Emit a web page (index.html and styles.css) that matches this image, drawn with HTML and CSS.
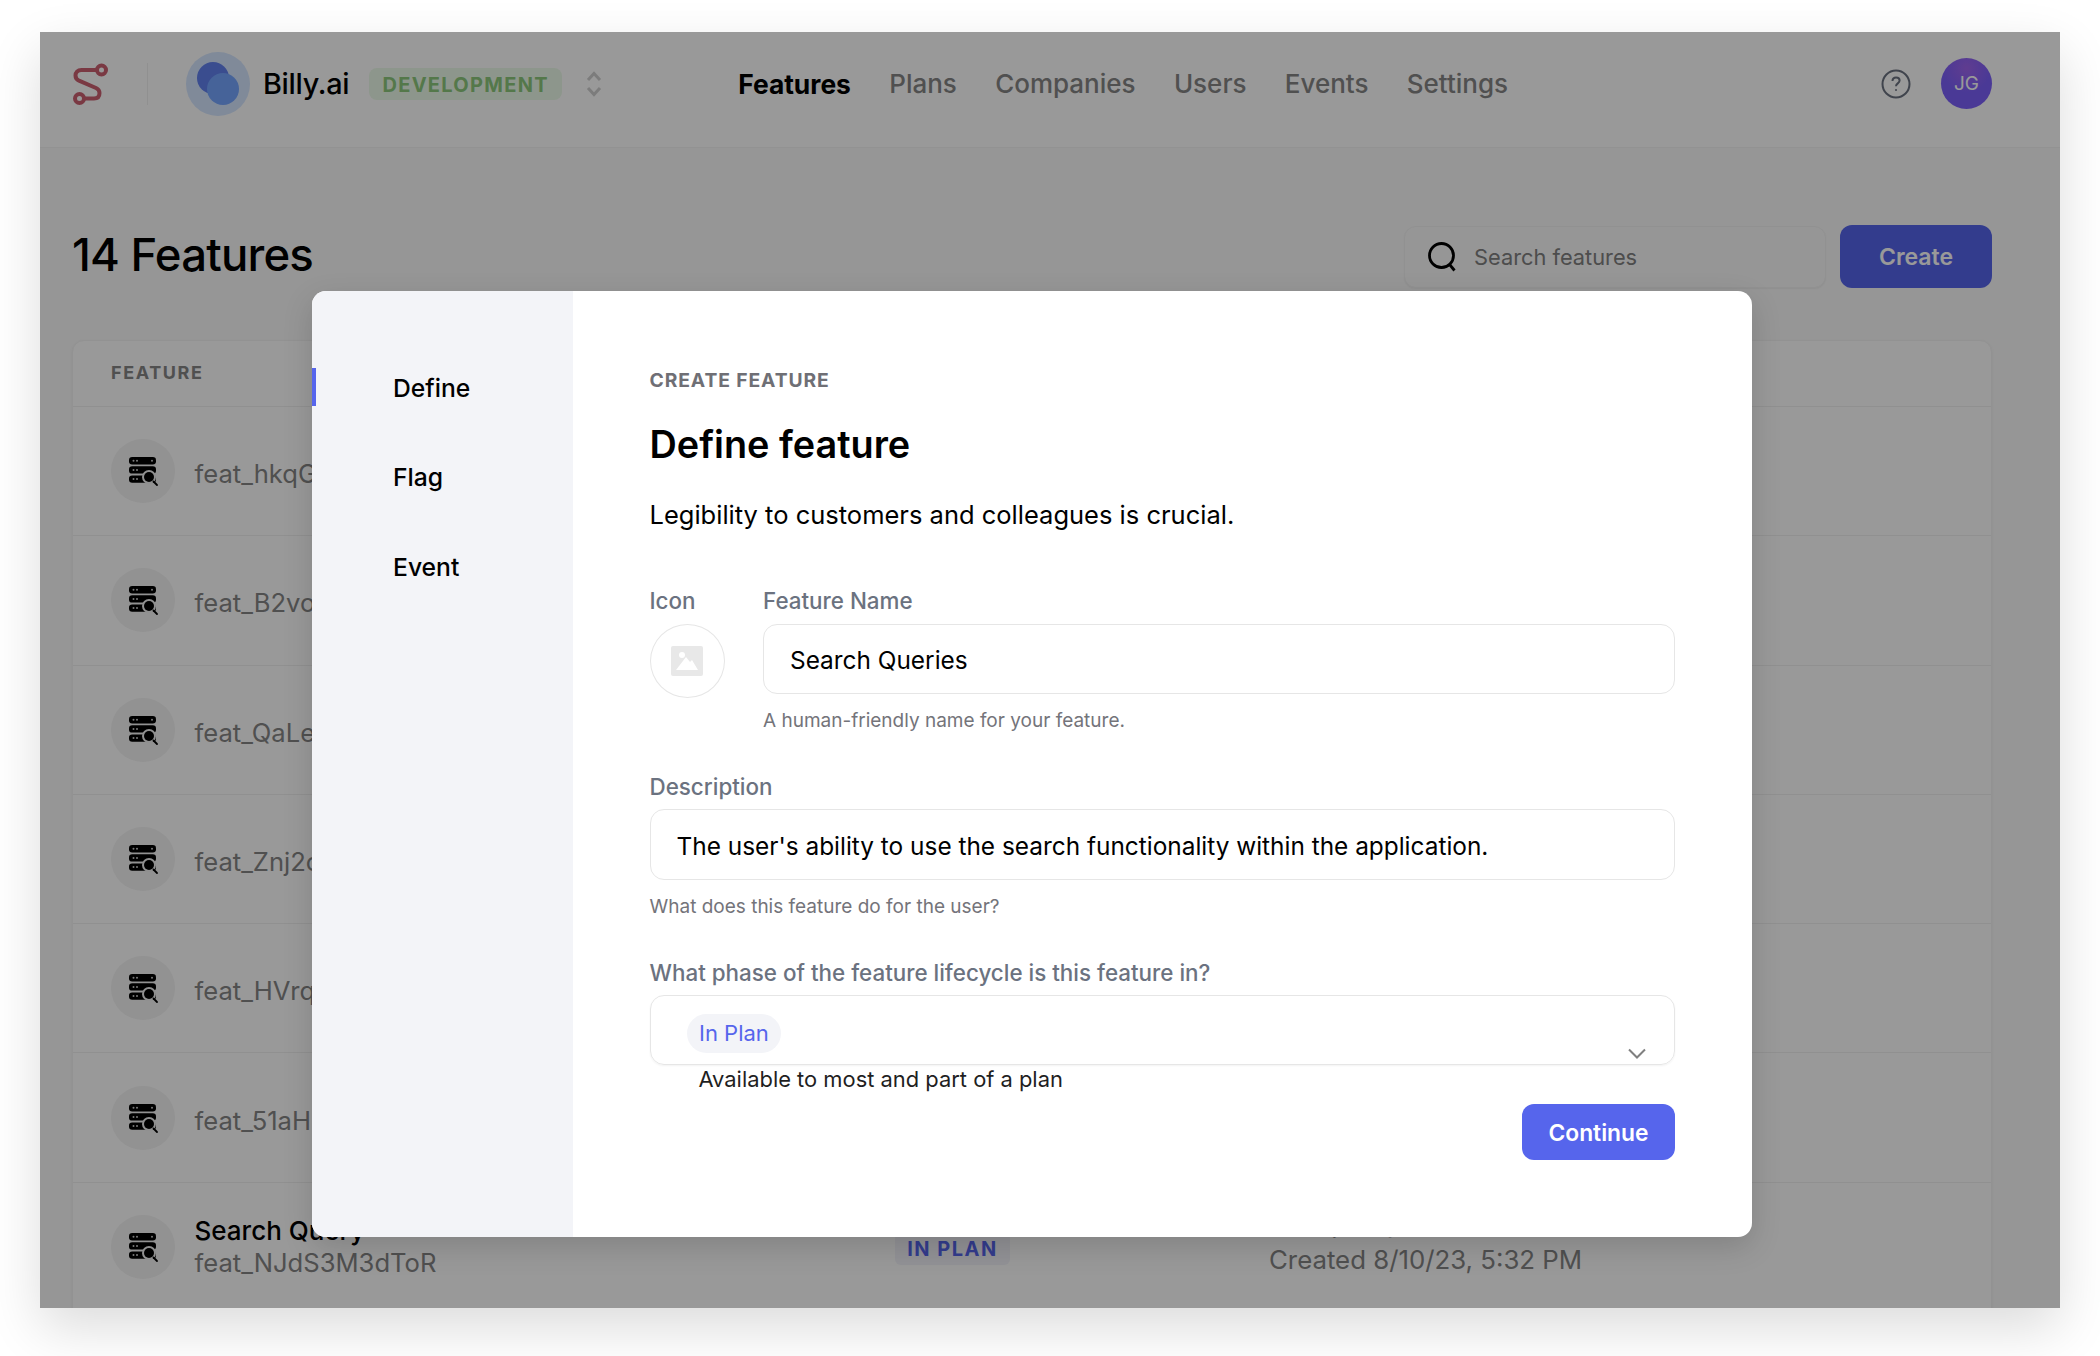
FILE: index.html
```html
<!DOCTYPE html>
<html lang="en">
<head>
  <meta charset="UTF-8" />
  <title>Billy.ai - Features</title>
  <link rel="stylesheet" href="styles.css">
</head>
<body>

  <svg class="sprites" width="0" height="0">
    <symbol id="server" viewBox="0 0 32 32">
      <rect x="2" y="2" width="27" height="7.4" rx="3.2" fill="#000"/>
      <rect x="2" y="11.2" width="27" height="7.4" rx="3.2" fill="#000"/>
      <rect x="2" y="20.4" width="27" height="7.4" rx="3.2" fill="#000"/>
      <g fill="#ccc">
        <circle cx="6.5" cy="5.7" r="1"/><circle cx="10" cy="5.7" r="1"/><circle cx="25" cy="5.7" r="1"/>
        <circle cx="6.5" cy="14.9" r="1"/><circle cx="10" cy="14.9" r="1"/>
        <circle cx="6.5" cy="24.1" r="1"/><circle cx="10" cy="24.1" r="1"/>
      </g>
      <circle cx="22" cy="22" r="7" fill="#f0f0f0"/>
      <circle cx="22" cy="22" r="5" fill="#000"/>
      <path d="M26.5 26.5 30 30" stroke="#000" stroke-width="1.8" stroke-linecap="round"/>
    </symbol>
  </svg>

  <div class="frame">
    <header class="topbar">
      <svg class="logo" viewBox="0 0 35 42" fill="none" stroke="#cb6071" stroke-width="4">
        <circle cx="28.5" cy="7" r="4.5"/>
        <circle cx="6.5" cy="35.5" r="4.5"/>
        <path d="M24 7H8.5C4.5 7 2.5 9.5 2.5 12.5c0 2.5 1 4 3.5 5.2l17 7.3c2.5 1.2 3.5 2.7 3.5 5 0 3.500-2 5.500-5.500 5.500H11"/>
      </svg>
      <span class="divider"></span>
      <span class="org-avatar"><i class="dot-a"></i><i class="dot-b"></i></span>
      <span class="org-name">Billy.ai</span>
      <span class="env-badge">DEVELOPMENT</span>
      <svg class="updown" viewBox="0 0 16 26" fill="none" stroke="#cfcfcf" stroke-width="3">
        <path d="M2 9 8 2.500 14 9M2 17l6 6.500 6-6.500"/>
      </svg>
      <nav class="nav">
        <a class="active">Features</a>
        <a>Plans</a>
        <a>Companies</a>
        <a>Users</a>
        <a>Events</a>
        <a>Settings</a>
      </nav>
      <div class="topbar-right">
        <svg class="help" viewBox="0 0 30 30" fill="none" stroke="#6b7280" stroke-width="2">
          <circle cx="15" cy="15" r="13.500"/>
          <path d="M11.500 12c0-2.200 1.600-3.600 3.600-3.600s3.500 1.300 3.500 3.200c0 2.800-3.600 2.800-3.600 5.600"/>
          <circle cx="15" cy="21" r="1" fill="#6b7280" stroke="none"/>
        </svg>
        <span class="user-avatar">JG</span>
      </div>
    </header>

    <main class="content">
      <div class="title-row">
        <h1>14 Features</h1>
        <div class="search">
          <svg viewBox="0 0 30 30" fill="none" stroke="#000" stroke-width="2.800">
            <circle cx="14.500" cy="13.500" r="12"/>
            <path d="M23 23l4.500 5.500"/>
          </svg>
          <span>Search features</span>
        </div>
        <button class="create">Create</button>
      </div>

      <section class="table">
        <div class="table-head">FEATURE</div>
        <div class="row">
          <span class="row-icon"><svg><use href="#server"/></svg></span>
          <span class="feat-id solo">feat_hkqG</span>
        </div>
        <div class="row">
          <span class="row-icon"><svg><use href="#server"/></svg></span>
          <span class="feat-id solo">feat_B2vo</span>
        </div>
        <div class="row">
          <span class="row-icon"><svg><use href="#server"/></svg></span>
          <span class="feat-id solo">feat_QaLe</span>
        </div>
        <div class="row">
          <span class="row-icon"><svg><use href="#server"/></svg></span>
          <span class="feat-id solo">feat_Znj2c</span>
        </div>
        <div class="row">
          <span class="row-icon"><svg><use href="#server"/></svg></span>
          <span class="feat-id solo">feat_HVrq</span>
        </div>
        <div class="row">
          <span class="row-icon"><svg><use href="#server"/></svg></span>
          <span class="feat-id solo">feat_51aH</span>
        </div>
        <div class="row">
          <span class="row-icon"><svg><use href="#server"/></svg></span>
          <div class="feat-col">
            <span class="feat-name">Search Query</span>
            <span class="feat-id">feat_NJdS3M3dToR</span>
          </div>
          <span class="status">IN PLAN</span>
          <div class="meta-col">
            <span class="feat-name">Query Logs</span>
            <span class="feat-id">Created 8/10/23, 5:32 PM</span>
          </div>
        </div>
      </section>
    </main>

    <div class="overlay"></div>

    <div class="modal">
      <aside class="steps">
        <a class="step active">Define</a>
        <a class="step">Flag</a>
        <a class="step">Event</a>
      </aside>
      <form class="form">
        <div class="eyebrow">CREATE FEATURE</div>
        <h2>Define feature</h2>
        <p class="lead">Legibility to customers and colleagues is crucial.</p>

        <div class="name-row">
          <div class="icon-field">
            <label>Icon</label>
            <span class="icon-pick">
              <svg viewBox="0 0 32 30">
                <rect width="32" height="30" rx="2" fill="#e8e8e8"/>
                <circle cx="11" cy="9" r="3" fill="#fff"/>
                <path d="M5 24 15 11l4 5 2-2 6 10z" fill="#fff"/>
              </svg>
            </span>
          </div>
          <div class="name-field">
            <label>Feature Name</label>
            <div class="input">Search Queries</div>
            <div class="hint">A human-friendly name for your feature.</div>
          </div>
        </div>

        <label class="label-gap">Description</label>
        <div class="input desc">The user's ability to use the search functionality within the application.</div>
        <div class="hint">What does this feature do for the user?</div>

        <label class="label-gap">What phase of the feature lifecycle is this feature in?</label>
        <div class="select">
          <span class="pill">In Plan</span>
          <svg class="chevron" viewBox="0 0 18 11" fill="none" stroke="#808080" stroke-width="2">
            <path d="M1 1.500 9 9.500 17 1.500"/>
          </svg>
        </div>
        <div class="option-note">Available to most and part of a plan</div>

        <div class="actions">
          <button type="button" class="continue">Continue</button>
        </div>
      </form>
    </div>
  </div>

</body>
</html>
```

FILE: styles.css
```css
* {
  box-sizing: border-box;
}

body {
  height: 1356px;
  margin: 0;
  padding: 32px 40px 0;
  background: #fff;
  font-family: Inter, "Noto Sans", sans-serif;
  color: #000;
}

.sprites {
  position: absolute;
}

.frame {
  position: relative;
  width: 2020px;
  height: 1276px;
  overflow: hidden;
  background: #fbfbfb;
  box-shadow: 0 20px 50px rgba(0, 0, 0, 0.14);
}

.overlay {
  position: absolute;
  inset: 0;
  background: rgba(0, 0, 0, 0.4);
}

/* top bar */

.topbar {
  display: flex;
  align-items: center;
  height: 116px;
  padding: 0 68px 12px 33px;
  background: #fff;
  border-bottom: 1px solid #f3f3f3;
}

.logo {
  width: 35px;
  height: 42px;
}

.divider {
  width: 1px;
  height: 42px;
  margin: 0 38px 0 39px;
  background: #f0f0f0;
}

.org-avatar {
  position: relative;
  width: 64px;
  height: 64px;
  border-radius: 50%;
  background: #d5e6ff;
  flex: none;
}

.org-avatar i {
  position: absolute;
  border-radius: 50%;
}

.dot-a {
  left: 11px;
  top: 10px;
  width: 32px;
  height: 32px;
  background: #6180ef;
}

.dot-b {
  left: 21px;
  top: 21px;
  width: 32px;
  height: 32px;
  background: #75a5ff;
}

.org-name {
  margin-left: 13px;
  font-size: 28.8px;
  font-weight: 500;
  letter-spacing: -0.3px;
}

.env-badge {
  margin-left: 20px;
  width: 193px;
  height: 32px;
  border-radius: 8px;
  background: #ecfbe9;
  color: #8dc87c;
  font-size: 20px;
  font-weight: 700;
  letter-spacing: 1.3px;
  line-height: 34px;
  text-align: center;
}

.updown {
  width: 16px;
  height: 26px;
  margin-left: 24px;
}

.nav {
  display: flex;
  gap: 38.3px;
  margin-left: 136px;
}

.nav a {
  font-size: 26px;
  font-weight: 500;
  color: #858585;
}

.nav a.active {
  font-size: 26.4px;
  font-weight: 700;
  color: #000;
}

.topbar-right {
  display: flex;
  align-items: center;
  gap: 30px;
  margin-left: auto;
}

.help {
  width: 30px;
  height: 30px;
}

.user-avatar {
  display: flex;
  align-items: center;
  justify-content: center;
  width: 51px;
  height: 51px;
  border-radius: 50%;
  background: radial-gradient(circle at 50% 20%, #a065f0, #7c60fa 50%);
  color: #fff;
  font-size: 19px;
}

/* page content */

.content {
  padding: 77px 68px 0 32px;
}

.title-row {
  display: flex;
  align-items: center;
  height: 63px;
}

h1 {
  margin: 0 auto 4px 0;
  font-size: 45.5px;
  font-weight: 500;
  letter-spacing: -0.8px;
}

.search {
  display: flex;
  align-items: center;
  gap: 17px;
  width: 422px;
  height: 62px;
  padding-left: 22px;
  border-radius: 12px;
  background: #fbfbfb;
  border: 1px solid #f2f2f2;
  box-shadow: 0 1px 2px rgba(0, 0, 0, 0.06);
  color: #808080;
  font-size: 21.8px;
}

.search svg {
  width: 30px;
  height: 30px;
}

.create {
  width: 152px;
  height: 63px;
  margin-left: 14px;
  border: none;
  border-radius: 12px;
  background: #5665ec;
  color: #fff;
  font-family: inherit;
  font-size: 23px;
  font-weight: 600;
}

.table {
  margin-top: 52px;
  height: 1100px;
  border: 1px solid #f3f3f3;
  border-radius: 12px;
  background: #fff;
  box-shadow: 0 1px 4px rgba(0, 0, 0, 0.05);
}

.table-head {
  height: 66px;
  padding-left: 38px;
  line-height: 64px;
  font-size: 18px;
  font-weight: 700;
  letter-spacing: 1.6px;
  color: #858585;
  border-bottom: 1px solid #f0f0f0;
}

.row {
  position: relative;
  display: flex;
  align-items: center;
  height: 129.300px;
  padding-left: 38px;
  border-bottom: 1px solid #f0f0f0;
}

.row-icon {
  display: flex;
  align-items: center;
  justify-content: center;
  width: 64px;
  height: 64px;
  margin-right: 19.5px;
  border-radius: 50%;
  background: #f3f3f3;
  flex: none;
}

.row-icon svg {
  width: 32px;
  height: 32px;
}

.feat-id {
  font-size: 25.6px;
  color: #858585;
}

.solo {
  padding-top: 5px;
}

.feat-col,
.meta-col {
  display: flex;
  flex-direction: column;
}

.feat-name {
  font-size: 26px;
  font-weight: 500;
  line-height: 32px;
}

.status {
  position: absolute;
  left: 822px;
  top: 50px;
  width: 115px;
  height: 32px;
  border-radius: 6px;
  background: #f3f4fb;
  color: #5665ec;
  font-size: 20px;
  font-weight: 700;
  letter-spacing: 1.5px;
  line-height: 32px;
  text-align: center;
}

.meta-col {
  position: absolute;
  left: 1196px;
  top: 24px;
  gap: 5px;
}

.meta-col .feat-id {
  font-size: 25.8px;
}

/* modal */

.modal {
  position: absolute;
  left: 272px;
  top: 259px;
  display: flex;
  width: 1440px;
  height: 946px;
  border-radius: 14px;
  overflow: hidden;
  background: #fff;
  box-shadow: 0 10px 30px rgba(0, 0, 0, 0.15);
}

.steps {
  display: flex;
  flex-direction: column;
  gap: 51.400px;
  width: 261px;
  padding-top: 77px;
  background: #f3f4f8;
}

.step {
  height: 38px;
  padding-left: 77px;
  border-left: 4px solid transparent;
  font-size: 24.7px;
  font-weight: 500;
  line-height: 41px;
}

.step.active {
  border-left-color: #5665ec;
}

.form {
  flex: 1;
  padding: 75px 77px 0 76.5px;
}

.eyebrow {
  font-size: 19.3px;
  font-weight: 700;
  letter-spacing: 0.9px;
  line-height: 28px;
  color: #6f6f75;
}

h2 {
  margin: 25px 0 0;
  font-size: 37.8px;
  font-weight: 600;
  line-height: 50px;
}

.lead {
  margin: 28px 0 0;
  font-size: 25.5px;
  line-height: 36px;
}

label {
  display: block;
  font-size: 22.4px;
  font-weight: 500;
  line-height: 28px;
  color: #6b7280;
}

.name-row {
  display: flex;
  gap: 38.5px;
  margin-top: 54px;
}

.icon-field {
  width: 75px;
}

.name-field {
  flex: 1;
}

.name-row label {
  margin-bottom: 9px;
}

.icon-pick {
  display: flex;
  align-items: center;
  justify-content: center;
  width: 75px;
  height: 74px;
  border: 1px solid #e6e6e6;
  border-radius: 50%;
}

.icon-pick svg {
  width: 32px;
  height: 30px;
}

.input {
  display: flex;
  align-items: center;
  height: 70px;
  padding: 2px 0 0 26px;
  border: 1px solid #e6e6e6;
  border-radius: 14px;
  font-size: 24.4px;
}

.input.desc {
  height: 71px;
}

.hint {
  margin-top: 15px;
  font-size: 19px;
  line-height: 24px;
  color: #74747a;
}

.label-gap {
  margin: 40px 0 8px;
}

.select {
  position: relative;
  height: 70px;
  padding: 18px 0 0 36px;
  border: 1px solid #e6e6e6;
  border-radius: 14px;
  box-shadow: 0 1px 2px rgba(0, 0, 0, 0.05);
}

.pill {
  display: inline-block;
  height: 39px;
  padding: 0 12.5px;
  border-radius: 20px;
  background: #f3f4f8;
  color: #5665ec;
  font-size: 22px;
  line-height: 39px;
}

.chevron {
  position: absolute;
  right: 28px;
  bottom: 5px;
  width: 18px;
  height: 11px;
}

.option-note {
  margin-top: 1px;
  padding-left: 49px;
  font-size: 21.9px;
  line-height: 26px;
  color: #1f1f1f;
}

.actions {
  display: flex;
  justify-content: flex-end;
  margin-top: 12px;
}

.continue {
  width: 153px;
  height: 56px;
  border: none;
  border-radius: 12px;
  background: #5665ec;
  color: #fff;
  font-family: inherit;
  font-size: 22.8px;
  font-weight: 600;
}
```
